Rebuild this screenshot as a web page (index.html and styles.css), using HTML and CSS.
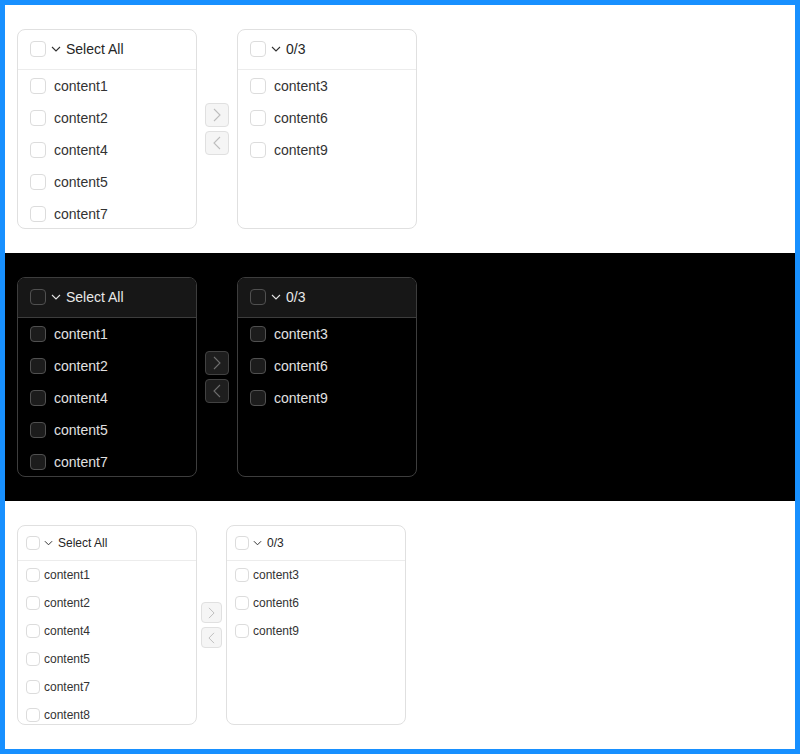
FILE: index.html
```html
<!DOCTYPE html>
<html lang="en">
<head>
    <meta charset="UTF-8">
    <meta name="viewport" content="width=device-width, initial-scale=1.0">
    <title>Transfer</title>
    <link rel="stylesheet" href="styles.css">
</head>
<body>
    <div class="frame">
        <!-- default -->
        <div class="demo">
            <div class="transfer">
                <div class="panel">
                    <div class="panel-head">
                        <span class="check"></span>
                        <svg class="caret" viewBox="0 0 10 6"><path d="M1 1 L5 5 L9 1"/></svg>
                        <span class="label">Select All</span>
                    </div>
                    <div class="list">
                        <div class="item"><span class="check"></span><span class="label">content1</span></div>
                        <div class="item"><span class="check"></span><span class="label">content2</span></div>
                        <div class="item"><span class="check"></span><span class="label">content4</span></div>
                        <div class="item"><span class="check"></span><span class="label">content5</span></div>
                        <div class="item"><span class="check"></span><span class="label">content7</span></div>
                    </div>
                </div>
                <div class="ops">
                    <button class="op"><svg viewBox="0 0 8 14"><path d="M1 1 L7 7 L1 13"/></svg></button>
                    <button class="op"><svg viewBox="0 0 8 14"><path d="M7 1 L1 7 L7 13"/></svg></button>
                </div>
                <div class="panel">
                    <div class="panel-head">
                        <span class="check"></span>
                        <svg class="caret" viewBox="0 0 10 6"><path d="M1 1 L5 5 L9 1"/></svg>
                        <span class="label">0/3</span>
                    </div>
                    <div class="list">
                        <div class="item"><span class="check"></span><span class="label">content3</span></div>
                        <div class="item"><span class="check"></span><span class="label">content6</span></div>
                        <div class="item"><span class="check"></span><span class="label">content9</span></div>
                    </div>
                </div>
            </div>
        </div>

        <!-- dark -->
        <div class="demo dark">
            <div class="transfer">
                <div class="panel">
                    <div class="panel-head">
                        <span class="check"></span>
                        <svg class="caret" viewBox="0 0 10 6"><path d="M1 1 L5 5 L9 1"/></svg>
                        <span class="label">Select All</span>
                    </div>
                    <div class="list">
                        <div class="item"><span class="check"></span><span class="label">content1</span></div>
                        <div class="item"><span class="check"></span><span class="label">content2</span></div>
                        <div class="item"><span class="check"></span><span class="label">content4</span></div>
                        <div class="item"><span class="check"></span><span class="label">content5</span></div>
                        <div class="item"><span class="check"></span><span class="label">content7</span></div>
                    </div>
                </div>
                <div class="ops">
                    <button class="op"><svg viewBox="0 0 8 14"><path d="M1 1 L7 7 L1 13"/></svg></button>
                    <button class="op"><svg viewBox="0 0 8 14"><path d="M7 1 L1 7 L7 13"/></svg></button>
                </div>
                <div class="panel">
                    <div class="panel-head">
                        <span class="check"></span>
                        <svg class="caret" viewBox="0 0 10 6"><path d="M1 1 L5 5 L9 1"/></svg>
                        <span class="label">0/3</span>
                    </div>
                    <div class="list">
                        <div class="item"><span class="check"></span><span class="label">content3</span></div>
                        <div class="item"><span class="check"></span><span class="label">content6</span></div>
                        <div class="item"><span class="check"></span><span class="label">content9</span></div>
                    </div>
                </div>
            </div>
        </div>

        <!-- small -->
        <div class="demo small">
            <div class="transfer">
                <div class="panel">
                    <div class="panel-head">
                        <span class="check"></span>
                        <svg class="caret" viewBox="0 0 10 6"><path d="M1 1 L5 5 L9 1"/></svg>
                        <span class="label">Select All</span>
                    </div>
                    <div class="list">
                        <div class="item"><span class="check"></span><span class="label">content1</span></div>
                        <div class="item"><span class="check"></span><span class="label">content2</span></div>
                        <div class="item"><span class="check"></span><span class="label">content4</span></div>
                        <div class="item"><span class="check"></span><span class="label">content5</span></div>
                        <div class="item"><span class="check"></span><span class="label">content7</span></div>
                        <div class="item"><span class="check"></span><span class="label">content8</span></div>
                    </div>
                </div>
                <div class="ops">
                    <button class="op"><svg viewBox="0 0 8 14"><path d="M1 1 L7 7 L1 13"/></svg></button>
                    <button class="op"><svg viewBox="0 0 8 14"><path d="M7 1 L1 7 L7 13"/></svg></button>
                </div>
                <div class="panel">
                    <div class="panel-head">
                        <span class="check"></span>
                        <svg class="caret" viewBox="0 0 10 6"><path d="M1 1 L5 5 L9 1"/></svg>
                        <span class="label">0/3</span>
                    </div>
                    <div class="list">
                        <div class="item"><span class="check"></span><span class="label">content3</span></div>
                        <div class="item"><span class="check"></span><span class="label">content6</span></div>
                        <div class="item"><span class="check"></span><span class="label">content9</span></div>
                    </div>
                </div>
            </div>
        </div>
    </div>
</body>
</html>
```

FILE: styles.css
```css
* {
    box-sizing: border-box;
    margin: 0;
    padding: 0;
}
body {
    font-family: 'Liberation Sans', Arial, sans-serif;
    background: #ffffff;
    color: #1d2129;
}
.frame {
    width: 800px;
    height: 754px;
    border: 5px solid #1890ff;
    background: #ffffff;
}
.demo {
    height: 248px;
    padding: 24px 12px;
    background: #ffffff;
}
.transfer {
    display: flex;
    align-items: center;
}
.panel {
    width: 180px;
    height: 200px;
    border: 1px solid #e0e0e0;
    border-radius: 8px;
    background: #ffffff;
    display: flex;
    flex-direction: column;
    overflow: hidden;
}
.panel-head {
    height: 40px;
    flex: none;
    display: flex;
    align-items: center;
    padding: 0 12px 1px;
    border-bottom: 1px solid #ececec;
    font-size: 14px;
    color: #262626;
}
.list {
    flex: 1;
    overflow: hidden;
}
.item {
    height: 32px;
    display: flex;
    align-items: center;
    padding: 0 12px;
    font-size: 14px;
    color: #333333;
}
.check {
    width: 16px;
    height: 16px;
    flex: none;
    border: 1px solid #dcdcdc;
    border-radius: 4px;
    background: #ffffff;
}
.item .label {
    margin-left: 8px;
}
.caret {
    width: 10px;
    height: 6px;
    margin-left: 5px;
    margin-right: 5px;
    fill: none;
    stroke: #333333;
    stroke-width: 1.1;
}
.ops {
    display: flex;
    flex-direction: column;
    gap: 4px;
    margin: 0 8px;
}
.op {
    width: 24px;
    height: 24px;
    border: 1px solid #e0e0e0;
    border-radius: 4px;
    background: #f5f5f5;
    display: flex;
    align-items: center;
    justify-content: center;
}
.op svg {
    width: 8px;
    height: 14px;
    fill: none;
    stroke: #bdbdbd;
    stroke-width: 1.1;
}

/* dark */
.dark {
    background: #000000;
}
.dark .panel {
    background: #000000;
    border-color: #3d3d3d;
}
.dark .panel-head {
    background: #171717;
    border-bottom-color: #3d3d3d;
    color: #e8e8e8;
}
.dark .item {
    color: #e0e0e0;
}
.dark .check {
    background: #1c1c1c;
    border-color: #505050;
}
.dark .caret {
    stroke: #e0e0e0;
}
.dark .op {
    background: #1e1e1e;
    border-color: #424242;
}
.dark .op svg {
    stroke: #6e6e6e;
}

/* small */
.small .panel-head {
    height: 35px;
    padding: 0 8px;
    font-size: 12px;
}
.small .item {
    height: 28px;
    padding: 0 8px;
    font-size: 12px;
}
.small .check {
    width: 14px;
    height: 14px;
}
.small .item .label {
    margin-left: 4px;
}
.small .caret {
    width: 9px;
    margin-left: 4px;
    margin-right: 5px;
}
.small .ops {
    margin: 0 4px;
}
.small .op {
    width: 21px;
    height: 21px;
}
.small .op svg {
    width: 7px;
    height: 12px;
}
```
